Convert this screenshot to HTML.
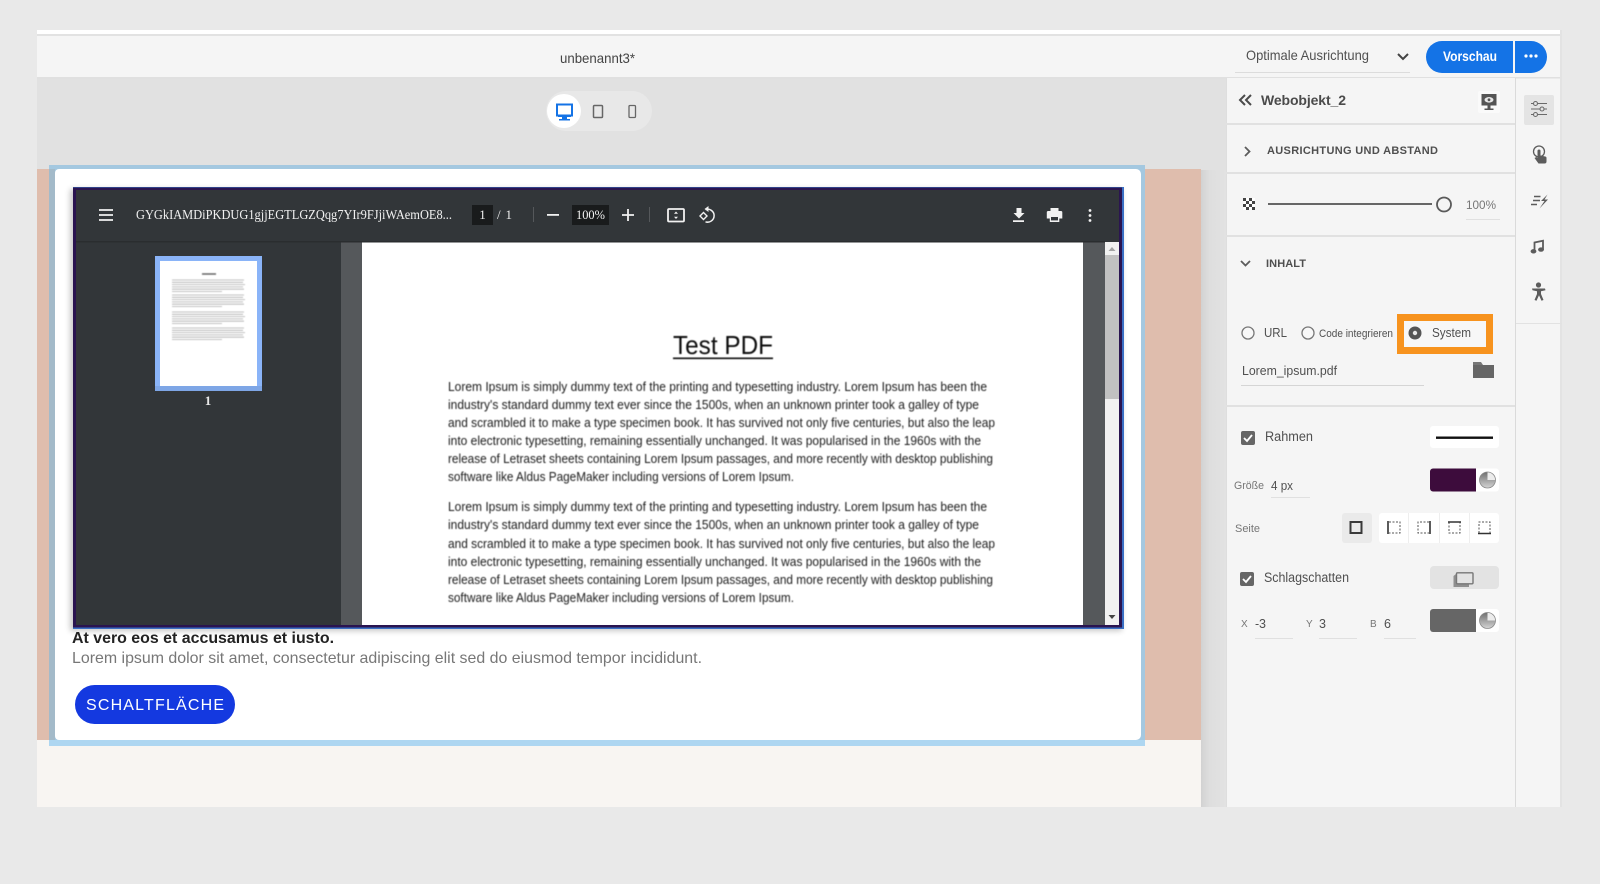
<!DOCTYPE html>
<html lang="de">
<head>
<meta charset="utf-8">
<title>unbenannt3*</title>
<style>
html,body{margin:0;padding:0;width:1600px;height:884px;overflow:hidden;background:#e9e9e9}
svg{position:absolute;left:0;top:0;display:block}
text{font-family:"Liberation Sans",sans-serif}
.p{font-size:12.5px;fill:#1c1c1c}
</style>
</head>
<body>
<svg width="1600" height="884" viewBox="0 0 1600 884" xmlns="http://www.w3.org/2000/svg">
<defs>
<filter id="b1" x="-5%" y="-5%" width="110%" height="110%"><feGaussianBlur stdDeviation="0.4"/></filter>
<filter id="b4" x="-5%" y="-5%" width="110%" height="110%"><feGaussianBlur stdDeviation="3"/></filter>
<linearGradient id="pie" x1="0" y1="0" x2="0" y2="1"><stop offset="0" stop-color="#6f6f6f"/><stop offset="1" stop-color="#d4d4d4"/></linearGradient>
<linearGradient id="side" x1="0" y1="0" x2="1" y2="0"><stop offset="0" stop-color="#d2d2d2"/><stop offset=".35" stop-color="#dedede"/><stop offset="1" stop-color="#e2e2e2"/></linearGradient>
</defs>

<!-- app frame -->
<rect x="37" y="30" width="1525" height="777" fill="#f5f5f5"/>
<rect x="37" y="30" width="1525" height="4" fill="#fff"/>
<rect x="37" y="34" width="1525" height="2" fill="#e2e2e2"/>
<rect x="37" y="78" width="1189" height="729" fill="#e1e1e1"/>
<rect x="37" y="77" width="1525" height="1.500" fill="#e0e0e0"/>
<rect x="1560" y="30" width="2" height="777" fill="#e3e3e3"/>

<!-- stage -->
<rect x="1201" y="170" width="25" height="637" fill="url(#side)"/>
<rect x="37" y="169" width="1164" height="571" fill="#dfbdad"/>
<rect x="37" y="740" width="1164" height="67" fill="#f8f5f2"/>

<!-- header -->
<text x="560" y="63" font-size="14" fill="#444" textLength="75" lengthAdjust="spacingAndGlyphs">unbenannt3*</text>
<text x="1246" y="60" font-size="14" fill="#505050" textLength="123" lengthAdjust="spacingAndGlyphs">Optimale Ausrichtung</text>
<path d="M1398 54l5 5 5-5" fill="none" stroke="#444" stroke-width="2"/>
<rect x="1235" y="72" width="175" height="1" fill="#dcdcdc"/>
<path d="M1513 41h-71a16 16 0 0 0 0 32h71z" fill="#1473e6"/>
<path d="M1515 41h16a16 16 0 0 1 0 32h-16z" fill="#1473e6"/>
<text x="1443" y="61" font-size="13.500" font-weight="700" fill="#fff" textLength="54" lengthAdjust="spacingAndGlyphs">Vorschau</text>
<circle cx="1526" cy="56" r="1.600" fill="#fff"/><circle cx="1531" cy="56" r="1.600" fill="#fff"/><circle cx="1536" cy="56" r="1.600" fill="#fff"/>

<!-- device switch -->
<rect x="546" y="91" width="106" height="40" rx="20" fill="#e8e8e8"/>
<circle cx="564" cy="111" r="17" fill="#fff"/>
<path d="M557 104.500h15v11h-15z" fill="none" stroke="#1473e6" stroke-width="2"/>
<path d="M558 115h13v2h-4v2h3v1.500h-11v-1.500h3v-2h-4z" fill="#1473e6"/>
<rect x="593.500" y="105.500" width="9" height="12" rx="1" fill="none" stroke="#666" stroke-width="1.500"/>
<rect x="629" y="105.500" width="6.500" height="12" rx="1" fill="none" stroke="#666" stroke-width="1.300"/>

<!-- selection frame and card -->
<rect x="49" y="165" width="1096" height="581" fill="#a4c8e0"/>
<rect x="49" y="740" width="1096" height="6" fill="#aed6f1"/>
<rect x="49" y="169" width="6" height="571" fill="#a3bac9"/>
<path d="M59 169h1077a5 5 0 0 1 5 5v561a5 5 0 0 1-5 5h-1077a4 4 0 0 1-4-4v-563a4 4 0 0 1 4-4z" fill="#fff"/>

<!-- pdf viewer -->
<rect x="70" y="189" width="1052" height="442" fill="#000" opacity=".22" filter="url(#b4)"/>
<rect x="73" y="187" width="1051" height="442" fill="#3a6fc4"/>
<rect x="73" y="187.500" width="1049" height="440" fill="#2a1450"/>
<rect x="76" y="190" width="1043" height="435" fill="#323639"/>
<rect x="341" y="242" width="21" height="383" fill="#55585b"/>
<rect x="362" y="242" width="721" height="383" fill="#fff"/>
<rect x="1083" y="242" width="22" height="383" fill="#55585b"/>
<rect x="1105" y="242" width="14" height="383" fill="#f1f1f1"/>
<rect x="1105" y="255" width="14" height="144" fill="#c1c1c1"/>
<path d="M1108.500 251l3.500-4 3.500 4z" fill="#a3a3a3"/>
<path d="M1108.500 615l3.500 4 3.500-4z" fill="#444"/>
<rect x="76" y="241" width="1029" height="1.500" fill="#2a2d2f"/>

<!-- pdf toolbar -->
<path d="M99 210h14M99 215h14M99 220h14" stroke="#f1f1f1" stroke-width="1.800"/>
<text x="136" y="219" font-size="13.500" style="font-family:'Liberation Serif',serif" fill="#f1f1f1" textLength="316" lengthAdjust="spacingAndGlyphs">GYGkIAMDiPKDUG1gjjEGTLGZQqg7YIr9FJjiWAemOE8...</text>
<rect x="472" y="205" width="21" height="20" fill="#191b1c"/>
<text x="482.500" y="219" font-size="13" text-anchor="middle" style="font-family:'Liberation Serif',serif" fill="#f1f1f1">1</text>
<text x="497" y="219" font-size="13" style="font-family:'Liberation Serif',serif" fill="#f1f1f1" textLength="15">/ 1</text>
<rect x="533" y="207" width="1" height="15" fill="#55585b"/>
<rect x="547" y="214" width="12" height="1.800" fill="#f1f1f1"/>
<rect x="572" y="205" width="37" height="20" fill="#191b1c"/>
<text x="576" y="219" font-size="12.500" style="font-family:'Liberation Serif',serif" fill="#f1f1f1" textLength="29" lengthAdjust="spacingAndGlyphs">100%</text>
<path d="M622 215h12M628 209v12" stroke="#f1f1f1" stroke-width="1.800"/>
<rect x="649" y="207" width="1" height="15" fill="#55585b"/>
<rect x="668" y="209" width="16" height="12.500" rx="1" fill="none" stroke="#f1f1f1" stroke-width="1.800"/>
<path d="M676 211.500l-2 2.200h4zM676 219l-2-2.200h4z" fill="#f1f1f1"/>
<path d="M704.500 209.500a6.500 6.500 0 1 1 0 12.300" fill="none" stroke="#f1f1f1" stroke-width="1.500" transform="translate(1 0)"/>
<path d="M708.500 206v6l-4-3z" fill="#f1f1f1"/>
<path d="M703.500 212.500l3.500 3.500-3.500 3.500-3.500-3.500z" fill="none" stroke="#f1f1f1" stroke-width="1.400"/>
<path d="M1016.500 208h5v5h3l-5.500 5.500-5.500-5.500h3zM1013 220.200h11v1.800h-11z" fill="#f1f1f1"/>
<path d="M1050.500 208h8v3h2.500a1.300 1.300 0 0 1 1.300 1.300v6.200h-3v3.500h-9.500v-3.500h-3v-6.200a1.300 1.300 0 0 1 1.300-1.300h2.400z" fill="#f1f1f1"/>
<rect x="1051" y="217" width="7" height="3.400" fill="#323639"/>
<circle cx="1090" cy="210.500" r="1.400" fill="#f1f1f1"/><circle cx="1090" cy="215.500" r="1.400" fill="#f1f1f1"/><circle cx="1090" cy="220.500" r="1.400" fill="#f1f1f1"/>

<!-- thumbnail -->
<rect x="155" y="256" width="107" height="135" fill="#8ab4f8"/>
<rect x="155" y="386" width="107" height="5" fill="#7ea6e6"/>
<rect x="160" y="261" width="97" height="125" fill="#fff"/>
<g stroke="#8a8a8a" stroke-width="0.800" opacity=".7" filter="url(#b1)">
<path d="M202 274h14" stroke="#222" stroke-width="1.500"/>
<path d="M172 280h72M172 282.300h71M172 284.600h73M172 286.900h71M172 289.200h72M172 291.500h50"/>
<path d="M172 295h72M172 297.300h71M172 299.600h73M172 301.900h71M172 304.200h72M172 306.500h50"/>
<path d="M172 312h72M172 314.300h71M172 316.600h73M172 318.900h71M172 321.200h72M172 323.500h50"/>
<path d="M172 328h72M172 330.300h71M172 332.600h73M172 334.900h71M172 337.200h72M172 339.500h50"/>
</g>
<text x="208" y="405" font-size="13" font-weight="700" text-anchor="middle" style="font-family:'Liberation Serif',serif" fill="#e8e8e8">1</text>

<!-- pdf page text -->
<g filter="url(#b1)">
<text x="673" y="354" font-size="26" fill="#111" textLength="100" lengthAdjust="spacingAndGlyphs">Test PDF</text>
<rect x="673" y="357.500" width="100" height="1.600" fill="#111"/>
<text class="p" x="448" y="391" textLength="539" lengthAdjust="spacingAndGlyphs">Lorem Ipsum is simply dummy text of the printing and typesetting industry. Lorem Ipsum has been the</text>
<text class="p" x="448" y="409" textLength="531" lengthAdjust="spacingAndGlyphs">industry's standard dummy text ever since the 1500s, when an unknown printer took a galley of type</text>
<text class="p" x="448" y="427" textLength="547" lengthAdjust="spacingAndGlyphs">and scrambled it to make a type specimen book. It has survived not only five centuries, but also the leap</text>
<text class="p" x="448" y="445" textLength="533" lengthAdjust="spacingAndGlyphs">into electronic typesetting, remaining essentially unchanged. It was popularised in the 1960s with the</text>
<text class="p" x="448" y="463" textLength="545" lengthAdjust="spacingAndGlyphs">release of Letraset sheets containing Lorem Ipsum passages, and more recently with desktop publishing</text>
<text class="p" x="448" y="481" textLength="346" lengthAdjust="spacingAndGlyphs">software like Aldus PageMaker including versions of Lorem Ipsum.</text>
<text class="p" x="448" y="511" textLength="539" lengthAdjust="spacingAndGlyphs">Lorem Ipsum is simply dummy text of the printing and typesetting industry. Lorem Ipsum has been the</text>
<text class="p" x="448" y="529" textLength="531" lengthAdjust="spacingAndGlyphs">industry's standard dummy text ever since the 1500s, when an unknown printer took a galley of type</text>
<text class="p" x="448" y="548" textLength="547" lengthAdjust="spacingAndGlyphs">and scrambled it to make a type specimen book. It has survived not only five centuries, but also the leap</text>
<text class="p" x="448" y="566" textLength="533" lengthAdjust="spacingAndGlyphs">into electronic typesetting, remaining essentially unchanged. It was popularised in the 1960s with the</text>
<text class="p" x="448" y="584" textLength="545" lengthAdjust="spacingAndGlyphs">release of Letraset sheets containing Lorem Ipsum passages, and more recently with desktop publishing</text>
<text class="p" x="448" y="602" textLength="346" lengthAdjust="spacingAndGlyphs">software like Aldus PageMaker including versions of Lorem Ipsum.</text>
</g>

<!-- card text -->
<text x="72" y="643" font-size="16" font-weight="700" fill="#222" textLength="262" lengthAdjust="spacingAndGlyphs">At vero eos et accusamus et iusto.</text>
<text x="72" y="663" font-size="16" fill="#777" textLength="630" lengthAdjust="spacingAndGlyphs">Lorem ipsum dolor sit amet, consectetur adipiscing elit sed do eiusmod tempor incididunt.</text>
<rect x="75" y="685" width="160" height="39" rx="19.500" fill="#1439e0"/>
<text x="86" y="710" font-size="16" fill="#fff" textLength="138" lengthAdjust="spacing">SCHALTFLÄCHE</text>

<!-- right panel -->
<rect x="1226" y="78" width="289" height="729" fill="#f5f5f5"/>
<rect x="1226" y="78" width="1" height="729" fill="#dedede"/>
<rect x="1515" y="78" width="1" height="729" fill="#dadada"/>
<rect x="1226" y="123" width="289" height="2" fill="#e1e1e1"/>
<rect x="1226" y="172" width="289" height="2" fill="#e1e1e1"/>
<rect x="1226" y="235" width="289" height="2" fill="#e1e1e1"/>
<rect x="1226" y="405" width="289" height="2" fill="#e1e1e1"/>
<rect x="1516" y="323" width="46" height="1" fill="#e2e2e2"/>

<path d="M1245 95l-5 5 5 5M1251 95l-5 5 5 5" fill="none" stroke="#4b4b4b" stroke-width="2"/>
<text x="1261" y="105" font-size="14" font-weight="700" fill="#4b4b4b" textLength="85" lengthAdjust="spacing">Webobjekt_2</text>
<rect x="1478" y="91" width="22" height="22" rx="2" fill="#fafafa"/>
<path d="M1481.500 94h15v11.500h-15z" fill="#555"/>
<path d="M1487.500 105.500h3v3h3v1.500h-9v-1.500h3z" fill="#555"/>
<ellipse cx="1489" cy="99.800" rx="4.500" ry="2.800" fill="#e8e8e8"/><circle cx="1489" cy="99.800" r="1.400" fill="#555"/>

<path d="M1245 147l4.500 4.500-4.500 4.500" fill="none" stroke="#5c5c5c" stroke-width="1.800"/>
<text x="1267" y="154" font-size="11" font-weight="700" fill="#4f4f4f" textLength="171" lengthAdjust="spacing">AUSRICHTUNG UND ABSTAND</text>

<rect x="1243" y="198" width="12" height="12" fill="#fff"/>
<path d="M1243 198h3v3h-3zM1249 198h3v3h-3zM1246 201h3v3h-3zM1252 201h3v3h-3zM1243 204h3v3h-3zM1249 204h3v3h-3zM1246 207h3v3h-3zM1252 207h3v3h-3z" fill="#444"/>
<rect x="1268" y="203" width="164" height="2" fill="#666"/>
<circle cx="1444" cy="204.500" r="7" fill="#f5f5f5" stroke="#5a5a5a" stroke-width="1.800"/>
<text x="1466" y="209" font-size="12" fill="#777" textLength="30" lengthAdjust="spacingAndGlyphs">100%</text>
<rect x="1466" y="219" width="34" height="1" fill="#e0e0e0"/>

<path d="M1241 261l4.500 4.500 4.500-4.500" fill="none" stroke="#5c5c5c" stroke-width="1.800"/>
<text x="1266" y="267" font-size="11" font-weight="700" fill="#4f4f4f" textLength="40" lengthAdjust="spacing">INHALT</text>

<!-- rail icons -->
<rect x="1524" y="95" width="30" height="30" rx="2" fill="#e4e4e4"/>
<g fill="none" stroke="#6a6a6a" stroke-width="1.100">
<path d="M1531 103.500h16M1531 109h16M1531 114.500h16"/>
<circle cx="1535.500" cy="103.500" r="2" fill="#e4e4e4"/><circle cx="1542" cy="109" r="2" fill="#e4e4e4"/><circle cx="1535.500" cy="114.500" r="2" fill="#e4e4e4"/>
</g>
<circle cx="1539" cy="151.500" r="5.500" fill="none" stroke="#5c5c5c" stroke-width="1.300"/>
<path d="M1537.500 151a1.500 1.500 0 0 1 3 0v4.500l4.700 1a1.500 1.500 0 0 1 1.300 1.500v3.500a2 2 0 0 1-2 2h-6l-4-5.500 1.800-1 1.200 1z" fill="#5c5c5c"/>
<path d="M1533 200.500h7M1534 196.500h6.500M1531 204.500h6" stroke="#5c5c5c" stroke-width="1.500"/>
<path d="M1547.500 194.500l-6.500 6.500h3.500l-5 7.500 8.500-9h-3.500z" fill="#5c5c5c"/>
<path d="M1534.500 251v-8.500l8.500-1.800v9" fill="none" stroke="#5c5c5c" stroke-width="1.800"/>
<ellipse cx="1533.500" cy="251.300" rx="2.900" ry="2.200" fill="#5c5c5c"/><ellipse cx="1541" cy="249.600" rx="2.900" ry="2.200" fill="#5c5c5c"/>
<circle cx="1538.500" cy="285" r="2.600" fill="#5c5c5c"/>
<path d="M1532 288.500h13l.5 1.800-4.500 1v2.700l2.500 6-2 .7-2.500-5.500-2.500 5.500-2-.7 2.500-6v-2.700l-4.500-1z" fill="#5c5c5c"/>

<!-- source options -->
<circle cx="1248" cy="333" r="6" fill="#f8f8f8" stroke="#777" stroke-width="1.300"/>
<text x="1264" y="337" font-size="13" fill="#505050" textLength="23" lengthAdjust="spacingAndGlyphs">URL</text>
<circle cx="1308" cy="333" r="6" fill="#f8f8f8" stroke="#777" stroke-width="1.300"/>
<text x="1319" y="337" font-size="11" fill="#505050" textLength="74" lengthAdjust="spacingAndGlyphs">Code integrieren</text>
<rect x="1400.500" y="317.500" width="89" height="33" fill="#f7f7f7" stroke="#f7931e" stroke-width="7"/>
<circle cx="1415" cy="333" r="6.500" fill="#555"/><circle cx="1415" cy="333" r="2.200" fill="#e8e8e8"/>
<text x="1432" y="337" font-size="13" fill="#505050" textLength="39" lengthAdjust="spacingAndGlyphs">System</text>
<text x="1242" y="375" font-size="13" fill="#505050" textLength="95" lengthAdjust="spacingAndGlyphs">Lorem_ipsum.pdf</text>
<rect x="1241" y="385" width="183" height="1" fill="#d5d5d5"/>
<path d="M1473 362h8l2 3h-10z" fill="#777"/>
<path d="M1473 365h21v13h-21z" fill="#666"/>

<!-- border -->
<rect x="1241" y="431" width="14" height="14" rx="2" fill="#666"/>
<path d="M1244 438l3 3 5-6" fill="none" stroke="#fff" stroke-width="1.800"/>
<text x="1265" y="441" font-size="13.500" fill="#505050" textLength="48" lengthAdjust="spacingAndGlyphs">Rahmen</text>
<rect x="1430" y="426" width="69" height="22" rx="3" fill="#fff"/>
<rect x="1436" y="436.500" width="57" height="2.400" fill="#111"/>

<text x="1234" y="489" font-size="11" fill="#767676" textLength="30" lengthAdjust="spacingAndGlyphs">Größe</text>
<text x="1271" y="490" font-size="13" fill="#505050" textLength="22" lengthAdjust="spacingAndGlyphs">4 px</text>
<rect x="1271" y="497" width="39" height="1" fill="#e0e0e0"/>
<rect x="1430" y="468.500" width="69" height="23" rx="3" fill="#fff"/>
<path d="M1476 468.500h-43a3 3 0 0 0-3 3v17a3 3 0 0 0 3 3h43z" fill="#3d0c3c"/>
<circle cx="1487.500" cy="480" r="8" fill="url(#pie)"/><path d="M1487.500 480v-8a8 8 0 0 1 8 8z" fill="#ececec"/>
<circle cx="1487.500" cy="480" r="8" fill="none" stroke="#8a8a8a" stroke-width=".8"/>

<text x="1235" y="532" font-size="11" fill="#767676" textLength="25" lengthAdjust="spacingAndGlyphs">Seite</text>
<rect x="1342" y="513" width="30" height="30" rx="3" fill="#eaeaea"/>
<rect x="1350.500" y="522" width="11" height="11" fill="none" stroke="#3a3a3a" stroke-width="2"/>
<rect x="1379" y="513" width="120" height="30" rx="3" fill="#fff"/>
<path d="M1408.500 513v30M1439.500 513v30M1469.500 513v30" stroke="#eee" stroke-width="1"/>
<g fill="none" stroke="#555" stroke-width="1" stroke-dasharray="2 1.500">
<path d="M1389 522h11v11h-11"/>
<path d="M1429 522h-11v11h11"/>
<path d="M1449 522v11h11v-11"/>
<path d="M1479 533v-11h11v11"/>
</g>
<g stroke="#333" stroke-width="1.600">
<path d="M1388 521v13M1430 521v13M1448 522h13M1478 533.500h13"/>
</g>

<!-- shadow -->
<rect x="1240" y="572" width="14" height="14" rx="2" fill="#666"/>
<path d="M1243 579l3 3 5-6" fill="none" stroke="#fff" stroke-width="1.800"/>
<text x="1264" y="582" font-size="13.500" fill="#505050" textLength="85" lengthAdjust="spacingAndGlyphs">Schlagschatten</text>
<rect x="1430" y="566" width="69" height="23" rx="4" fill="#e3e3e3"/>
<path d="M1453.500 576l2.500-2h13v13h-15.500z" fill="#8f8f8f"/>
<rect x="1456.500" y="572.800" width="16.500" height="11" rx="1" fill="#e3e3e3" stroke="#777" stroke-width="1.400"/>

<text x="1241" y="627" font-size="10" fill="#767676">X</text>
<text x="1255" y="628" font-size="12.500" fill="#505050" textLength="11">-3</text>
<rect x="1255" y="638" width="38" height="1" fill="#e0e0e0"/>
<text x="1306" y="627" font-size="10" fill="#767676">Y</text>
<text x="1319" y="628" font-size="12.500" fill="#505050">3</text>
<rect x="1319" y="638" width="38" height="1" fill="#e0e0e0"/>
<text x="1370" y="627" font-size="10" fill="#767676">B</text>
<text x="1384" y="628" font-size="12.500" fill="#505050">6</text>
<rect x="1384" y="638" width="32" height="1" fill="#e0e0e0"/>
<rect x="1430" y="609" width="69" height="23" rx="3" fill="#fff"/>
<path d="M1476 609h-43a3 3 0 0 0-3 3v17a3 3 0 0 0 3 3h43z" fill="#666"/>
<circle cx="1487.500" cy="620.500" r="8" fill="url(#pie)"/><path d="M1487.500 620.500v-8a8 8 0 0 1 8 8z" fill="#ececec"/>
<circle cx="1487.500" cy="620.500" r="8" fill="none" stroke="#8a8a8a" stroke-width=".8"/>
</svg>
</body>
</html>
